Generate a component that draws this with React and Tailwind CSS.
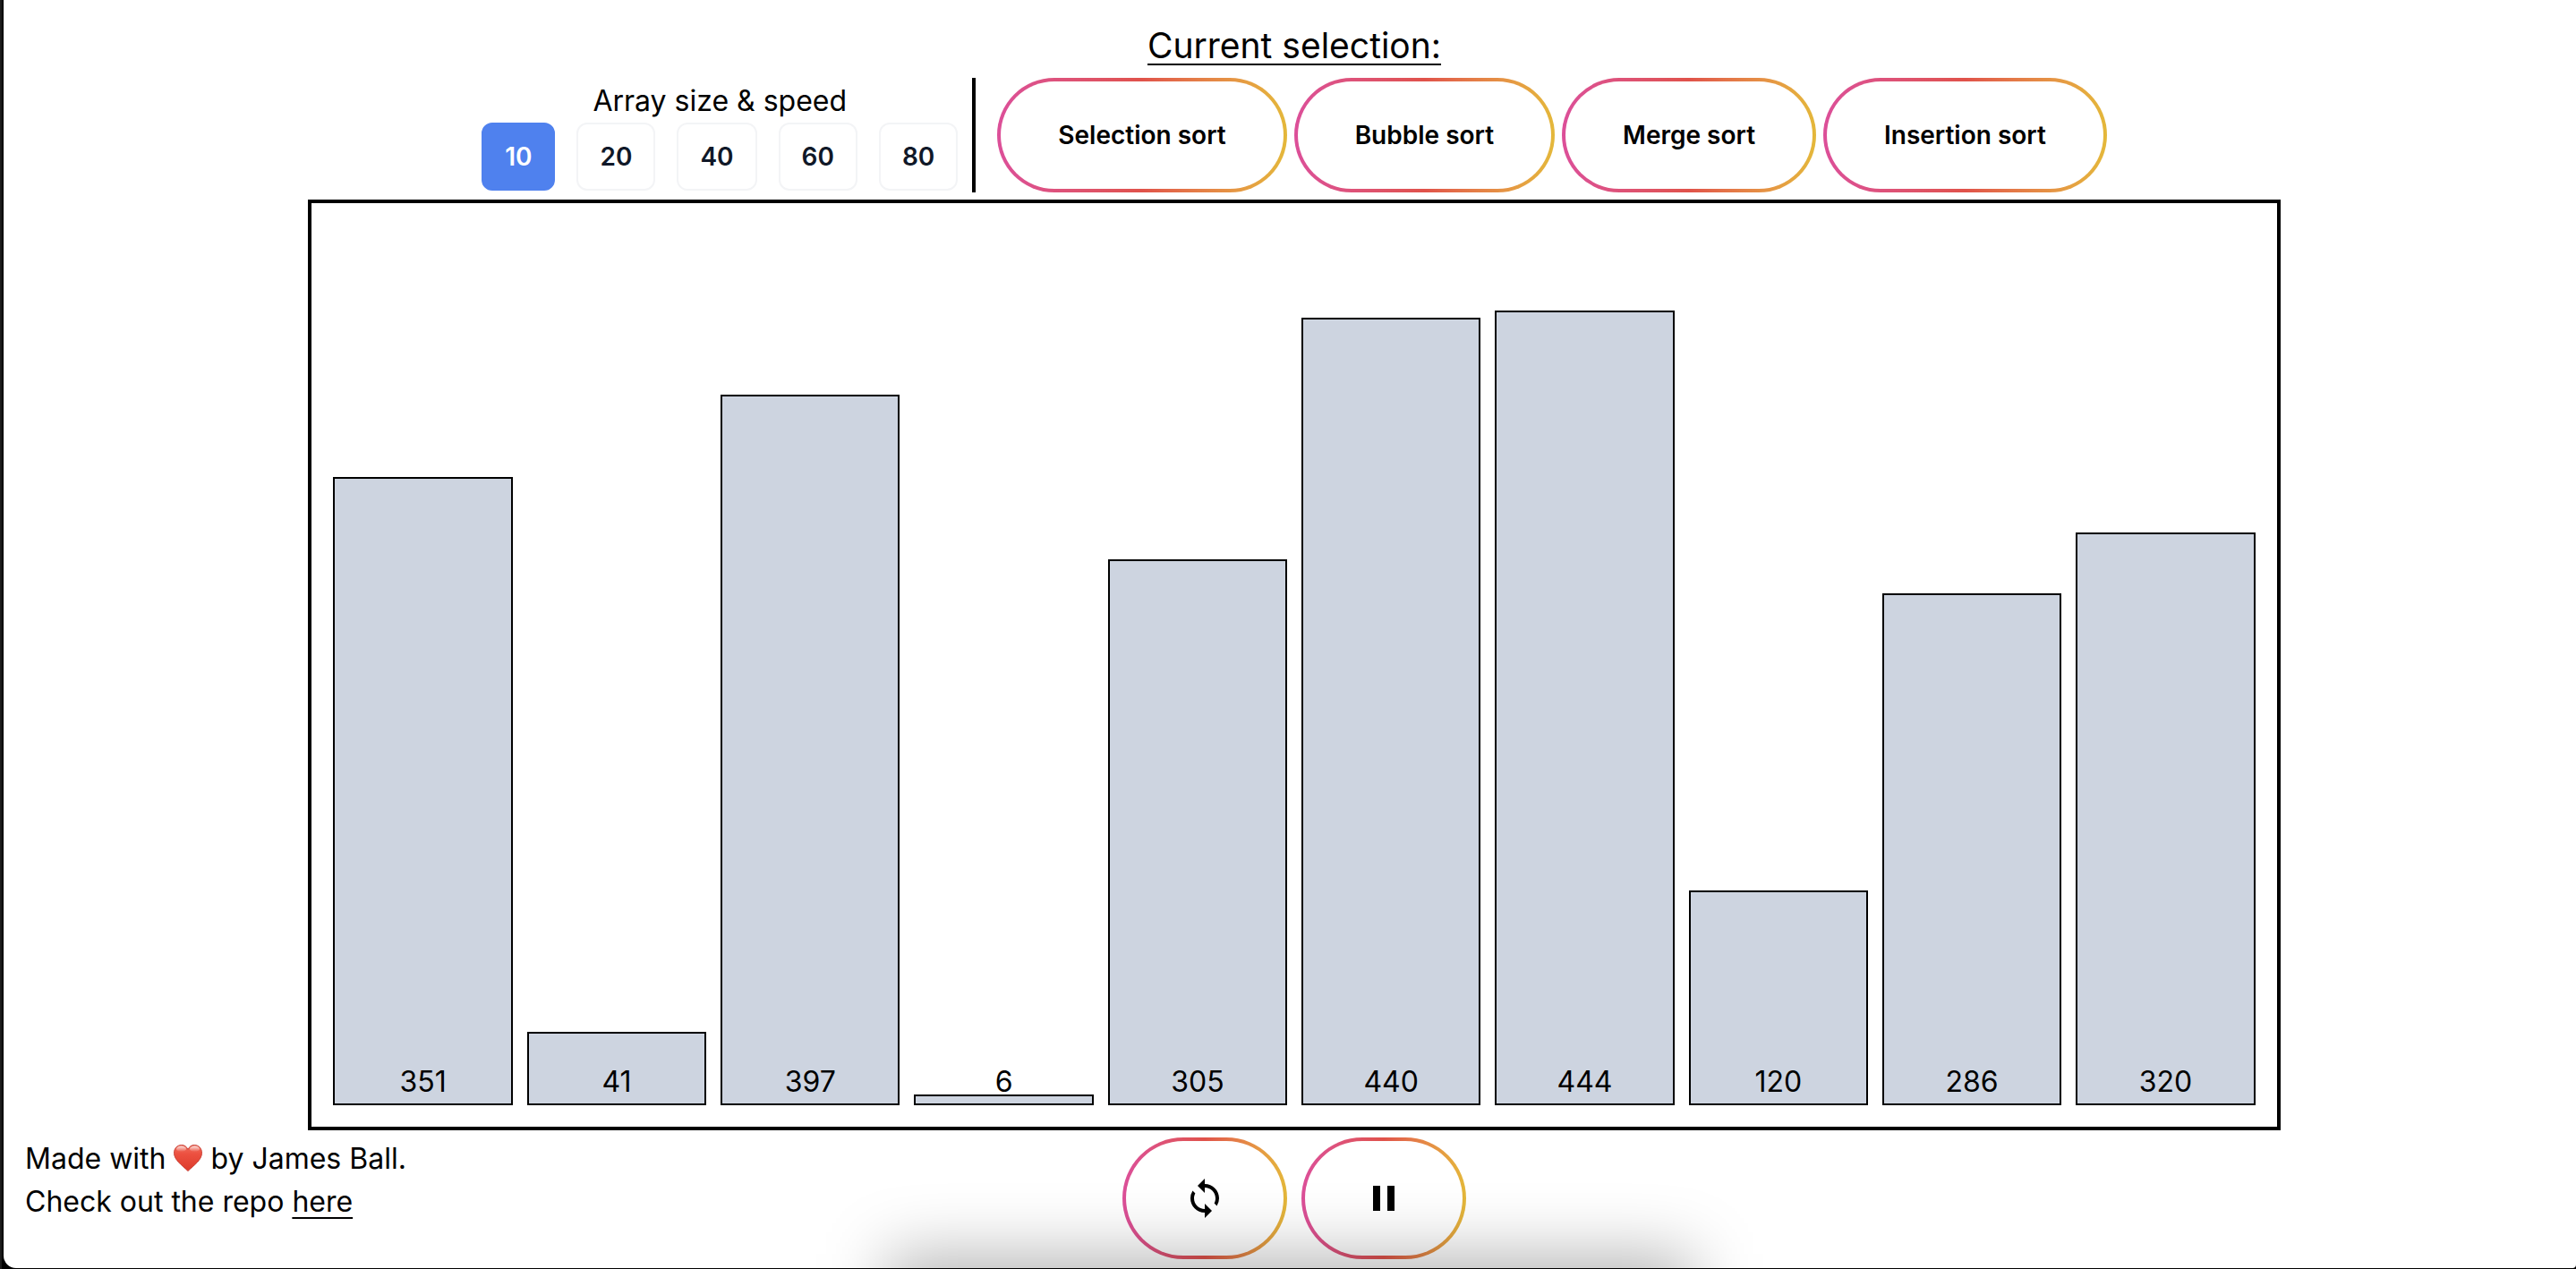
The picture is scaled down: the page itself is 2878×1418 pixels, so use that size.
import { useState } from "react";
import { MdLoop, MdPause } from "react-icons/md";

const SIZES = [10, 20, 40, 60, 80];
const SORTS = ["Selection sort", "Bubble sort", "Merge sort", "Insertion sort"];
const VALUES = [351, 41, 397, 6, 305, 440, 444, 120, 286, 320];

function GradientButton({ children, ...props }) {
  return (
    <button
      type="button"
      className="rounded-full bg-linear-to-r from-[#dc4f99] via-[#e0524a] to-[#e4b83a] p-1 text-[28px] leading-10 font-[580] text-black"
      {...props}
    >
      <span className="block rounded-full bg-white px-16 py-10 whitespace-nowrap">{children}</span>
    </button>
  );
}

function Heart() {
  return (
    <svg viewBox="0 0 32 30" className="inline-block h-[30px] w-8 align-[-3px]" role="img" aria-label="love">
      <defs>
        <linearGradient id="heart-body" x1="0" y1="0" x2="0" y2="1">
          <stop offset="0" stopColor="#f0705f" />
          <stop offset="0.35" stopColor="#ec5040" />
          <stop offset="1" stopColor="#dc3a2a" />
        </linearGradient>
        <linearGradient id="heart-shine" x1="0" y1="0" x2="0" y2="1">
          <stop offset="0" stopColor="#fff" stopOpacity="0.75" />
          <stop offset="1" stopColor="#fff" stopOpacity="0" />
        </linearGradient>
      </defs>
      <path
        d="M16 5.500C14.600 2.200 12 .5 8.800 .5 4 .5 .5 4.300 .5 9.300c0 8 9 14 15.500 20.200C22.500 23.300 31.500 17.300 31.500 9.300c0-5-3.500-8.800-8.300-8.800C20 .5 17.400 2.200 16 5.500z"
        fill="url(#heart-body)"
        stroke="#c9453b"
        strokeWidth="1"
      />
      <ellipse cx="8.500" cy="4.800" rx="5.500" ry="3.200" fill="url(#heart-shine)" />
      <ellipse cx="23.500" cy="4.800" rx="5.500" ry="3.200" fill="url(#heart-shine)" />
    </svg>
  );
}

export default function App() {
  const [size, setSize] = useState(10);

  return (
    <div className="flex min-h-screen flex-col border-l-2 border-[#1c1c1c] bg-black pb-px pl-0.5 font-['Inter',sans-serif] text-black">
      <div className="relative flex grow flex-col gap-2 overflow-hidden rounded-br-[4px] rounded-bl-[14px] bg-white pt-[23px] pl-2.5">
        <h1 className="text-center text-[39px] leading-14 font-normal underline decoration-2 underline-offset-[6px]">
          Current selection:
        </h1>

        <div className="flex justify-center">
          <div className="flex flex-col items-center justify-center pr-4">
            <p id="size-label" className="text-[32px] leading-12">Array size &amp; speed</p>
            <div className="flex gap-6" role="group" aria-labelledby="size-label">
              {SIZES.map((n) => (
                <button
                  key={n}
                  type="button"
                  aria-pressed={n === size}
                  onClick={() => setSize(n)}
                  className={
                    n === size
                      ? "rounded-xl border-2 border-[#4f81ee] bg-[#4f81ee] px-6 py-4 text-[28px] leading-10 font-[580] text-white"
                      : "rounded-xl border-2 border-gray-100 bg-white px-6 py-4 text-[28px] leading-10 font-[580] text-gray-900"
                  }
                >
                  {n}
                </button>
              ))}
            </div>
          </div>
          <div className="flex gap-2 border-l-4 border-black pl-6">
            {SORTS.map((s) => (
              <GradientButton key={s}>{s}</GradientButton>
            ))}
          </div>
        </div>

        <main className="mx-auto flex h-[1040px] w-10/13 items-end gap-4 border-4 border-black p-6">
          {VALUES.map((v) => (
            <div
              key={v}
              className="flex min-w-0 flex-1 items-end justify-center border-2 border-black bg-[#cdd4e0] text-[32px] leading-12"
              style={{ height: v * 2 }}
            >
              {v}
            </div>
          ))}
        </main>

        <footer className="grid grid-cols-[1fr_auto_1fr] px-3.5 text-[32px] leading-12">
          <div>
            <p>
              Made with <Heart /> by James Ball.
            </p>
            <p>
              Check out the repo{" "}
              <a href="#repo" className="underline decoration-2 underline-offset-[6px]">here</a>
            </p>
          </div>
          <div className="flex gap-4">
            <GradientButton aria-label="Shuffle">
              <MdLoop className="size-12" />
            </GradientButton>
            <GradientButton aria-label="Pause">
              <MdPause className="size-12" />
            </GradientButton>
          </div>
        </footer>

        <div
          aria-hidden="true"
          className="pointer-events-none absolute inset-x-0 -bottom-56 mx-auto h-60 w-[900px] bg-black/28 blur-[36px]"
        />
      </div>
    </div>
  );
}
